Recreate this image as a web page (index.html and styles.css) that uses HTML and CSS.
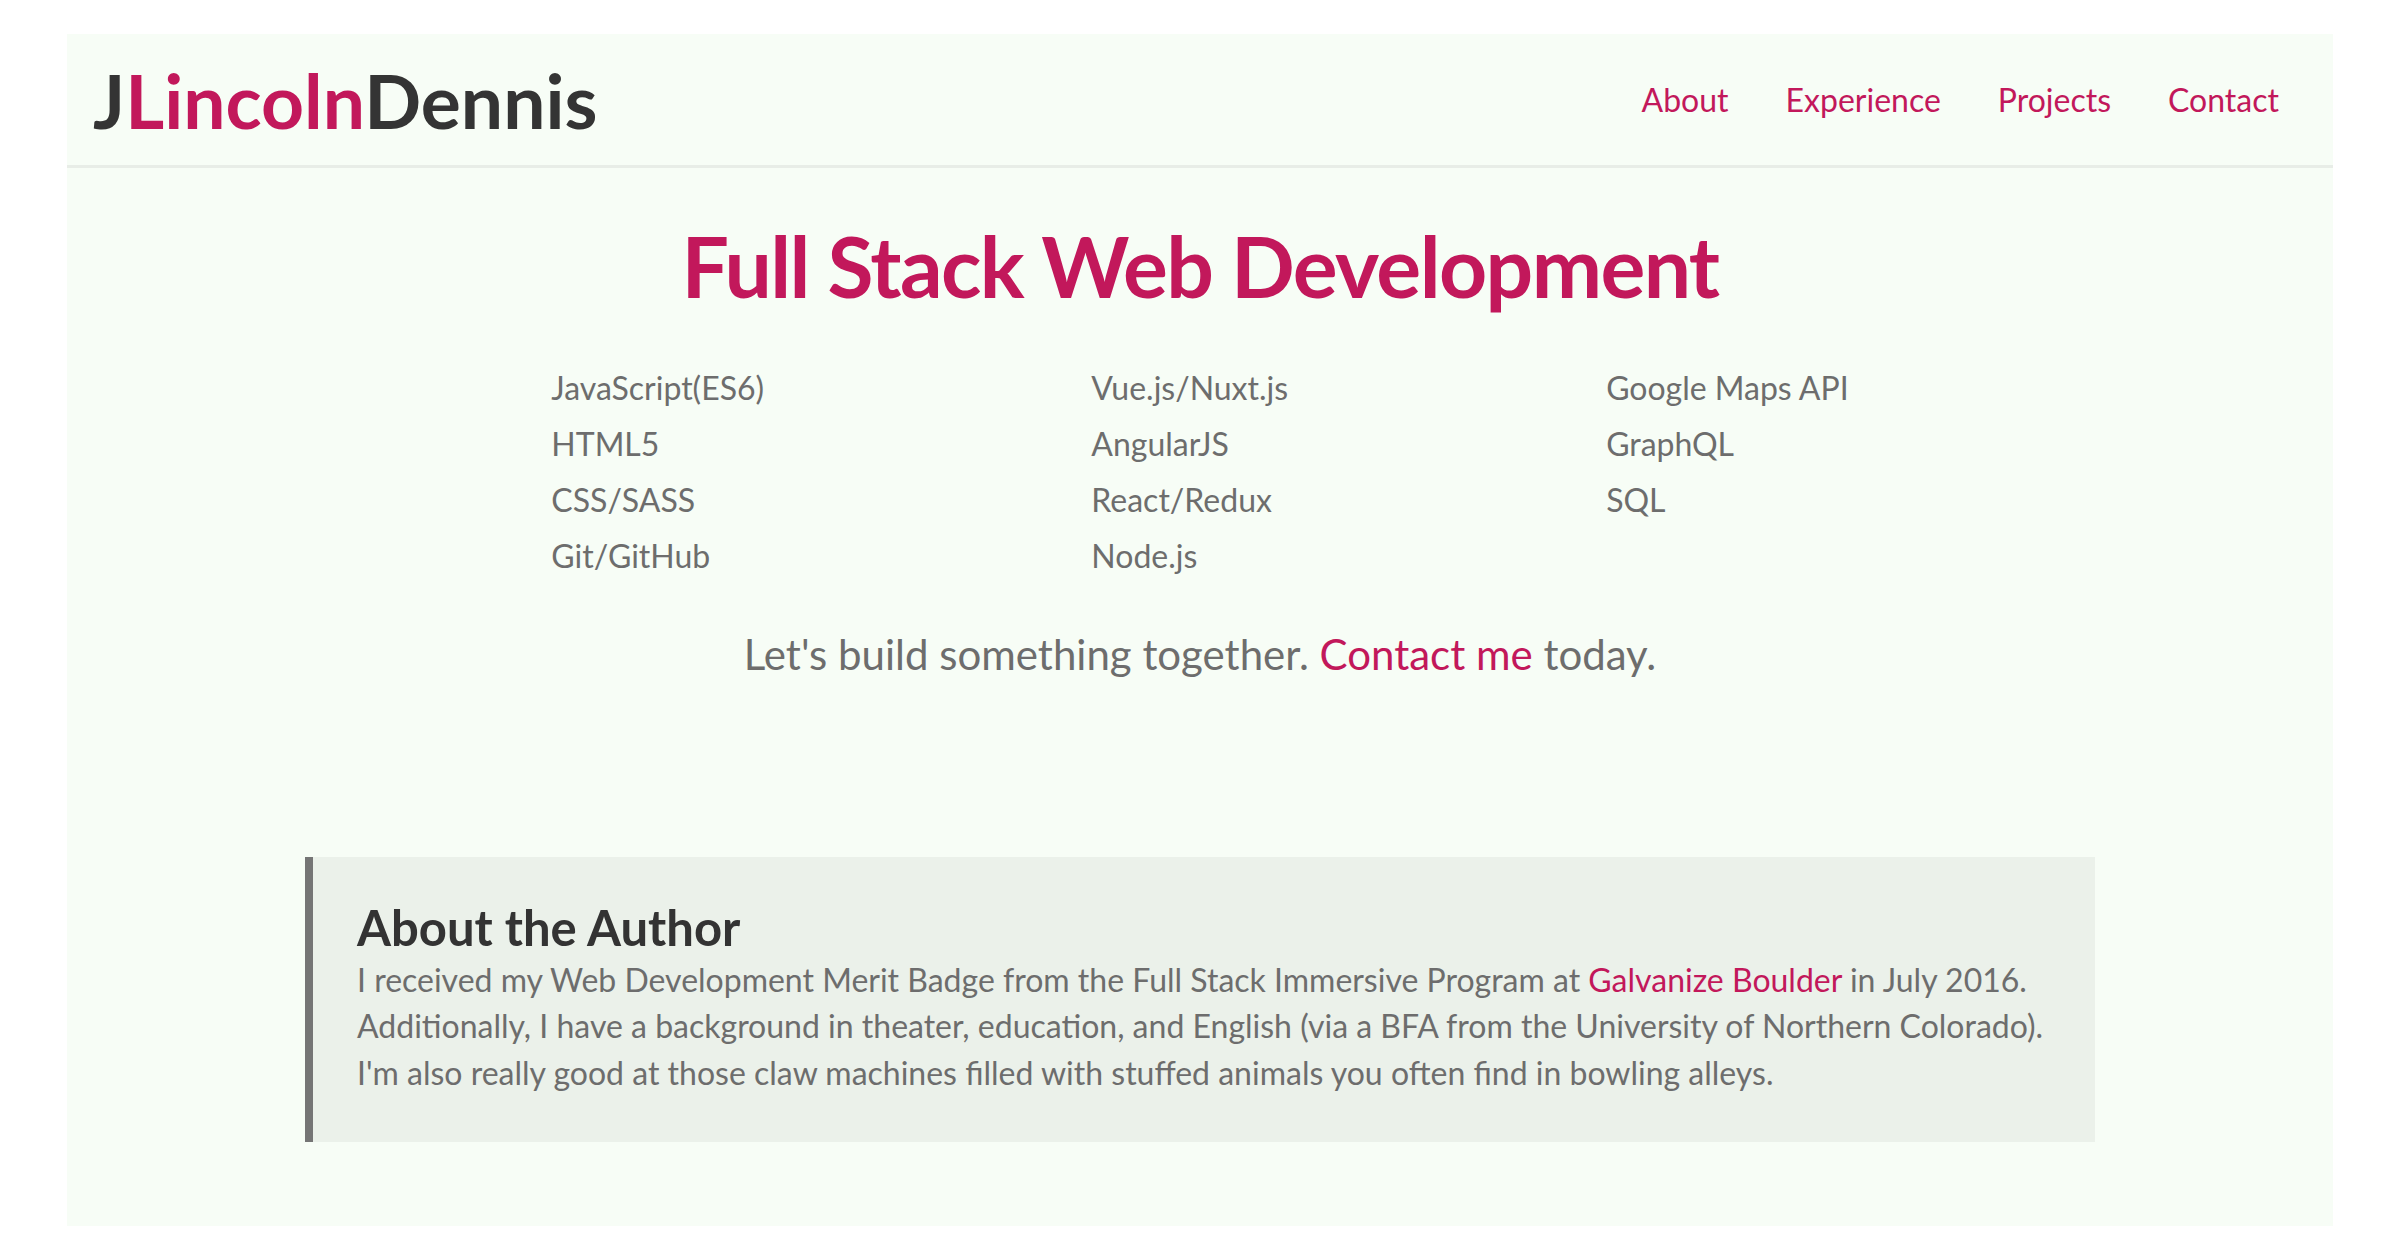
FILE: index.html
```html
<!DOCTYPE html>
<html lang="en">
<head>
<meta charset="utf-8">
<title>JLincolnDennis</title>
<link rel="stylesheet" href="styles.css">
</head>
<body>
<div class="page">
  <header class="site-header">
    <a class="logo" href="#"><span class="logo-dark">J</span><span class="logo-accent">Lincoln</span><span class="logo-dark">Dennis</span></a>
    <nav class="nav">
      <a href="#about">About</a>
      <a href="#experience">Experience</a>
      <a href="#projects">Projects</a>
      <a href="#contact">Contact</a>
    </nav>
  </header>
  <main class="hero">
    <h1 class="title">Full Stack Web Development</h1>
    <div class="skills">
      <ul class="skill-col">
        <li>JavaScript(ES6)</li>
        <li>HTML5</li>
        <li>CSS/SASS</li>
        <li>Git/GitHub</li>
      </ul>
      <ul class="skill-col">
        <li>Vue.js/Nuxt.js</li>
        <li>AngularJS</li>
        <li>React/Redux</li>
        <li>Node.js</li>
      </ul>
      <ul class="skill-col">
        <li>Google Maps API</li>
        <li>GraphQL</li>
        <li>SQL</li>
      </ul>
    </div>
    <p class="tagline">Let's build something together. <a href="#contact">Contact me</a> today.</p>
    <section class="about" id="about">
      <h2>About the Author</h2>
      <p>I received my Web Development Merit Badge from the Full Stack Immersive Program at <a href="#">Galvanize Boulder</a> in July 2016.<br>Additionally, I have a background in theater, education, and English (via a BFA from the University of Northern Colorado).<br>I'm also really good at those claw machines filled with stuffed animals you often find in bowling alleys.</p>
    </section>
  </main>
</div>
</body>
</html>
```

FILE: styles.css
```css
html, body {
  margin: 0;
  padding: 0;
  background: #ffffff;
}

body {
  font-family: Lato, "Open Sans", sans-serif;
  padding: 34px 67px 32px;
}

a {
  text-decoration: none;
}

.page {
  background: #f7fdf6;
  min-height: 1190px;
}

.site-header {
  display: flex;
  align-items: center;
  justify-content: space-between;
  height: 131px;
  border-bottom: 3px solid #e8ede7;
  padding: 0 54px 0 26px;
}

.logo {
  font-size: 75px;
  font-weight: 700;
}

.logo-dark {
  color: #343434;
}

.logo-accent {
  color: #c2185b;
}

.nav {
  display: flex;
  gap: 57px;
}

.nav a {
  color: #c2185b;
  font-size: 32px;
}

.hero {
  display: flex;
  flex-direction: column;
  align-items: center;
  padding: 48px 0 84px;
}

.title {
  margin: 0;
  color: #c2185b;
  font-size: 84px;
  font-weight: 700;
  line-height: 1.2;
  letter-spacing: -1.6px;
}

.skills {
  display: flex;
  gap: 318px;
  margin-top: 43px;
}

.skill-col {
  list-style: none;
  margin: 0;
  padding: 0;
  color: #6d6d6d;
  font-size: 32px;
  line-height: 56px;
}

.skill-col:first-child {
  min-width: 222px;
}

.tagline {
  margin: 45px 0 0;
  color: #6d6d6d;
  font-size: 42px;
  line-height: 1.2;
}

.tagline a,
.about a {
  color: #c2185b;
}

.about {
  box-sizing: border-box;
  width: 1790px;
  margin-top: 178px;
  padding: 41px 40px 46px 44px;
  background: #ebf1ea;
  border-left: 8px solid #757575;
}

.about h2 {
  margin: 0;
  color: #333333;
  font-size: 49px;
  font-weight: 700;
  line-height: 1.2;
}

.about p {
  margin: 0;
  color: #6d6d6d;
  font-size: 32px;
  line-height: 46.5px;
}
```
